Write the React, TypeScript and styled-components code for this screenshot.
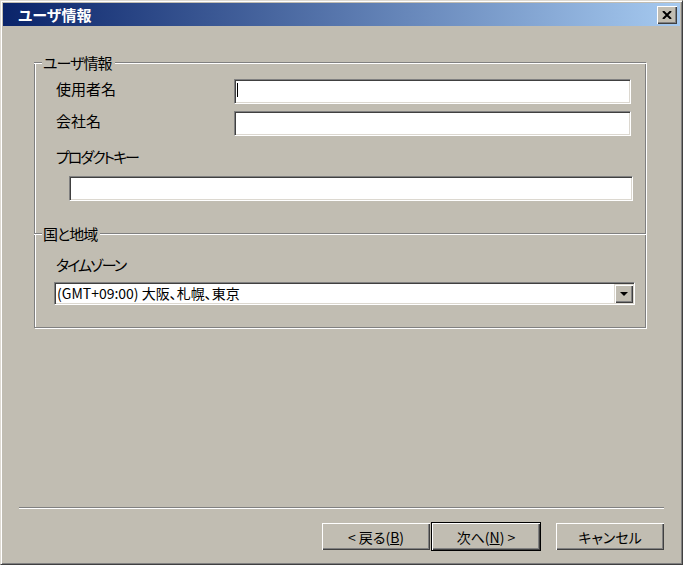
import React from "react";
import styled, { createGlobalStyle } from "styled-components";

const FACE = "#c1bdb2";

const GlobalStyle = createGlobalStyle`
  html, body {
    margin: 0;
    padding: 0;
    background: ${FACE};
  }
  body {
    font-family: "Noto Sans CJK JP", "Noto Sans", sans-serif;
    font-feature-settings: "palt";
    color: #000;
  }
`;

const Window = styled.div`
  width: 683px;
  height: 565px;
  box-sizing: border-box;
  display: flex;
  flex-direction: column;
  padding: 2px;
  background: ${FACE};
  border: 1px solid;
  border-color: #dedad2 #404040 #404040 #dedad2;
  box-shadow: inset 1px 1px 0 #fff, inset -1px -1px 0 #808080;
  overflow: hidden;
`;

const TitleBar = styled.div`
  flex: none;
  height: 23px;
  display: flex;
  align-items: center;
  padding: 0 3px 0 15px;
  background: linear-gradient(to right, #0a246a, #a6caf0);
`;

const Title = styled.span`
  flex: 1;
  color: #fff;
  font-size: 15px;
  font-weight: bold;
  line-height: 18px;
`;

const CloseButton = styled.div`
  width: 20px;
  height: 18px;
  background: ${FACE};
  box-shadow: inset 1px 1px 0 #fff, inset -1px -1px 0 #404040,
    inset -2px -2px 0 #808080;
  display: flex;
  align-items: center;
  justify-content: center;
`;

const Content = styled.div`
  padding: 36px 34px 0 31px;
`;

const GroupFrame = styled.div`
  display: flex;
  flex-direction: column;
  border: 1px solid #808080;
  border-top: none;
  box-shadow: inset 1px 0 0 #fff, 1px 1px 0 #fff;
  padding: 0 14px 22px 21px;
`;

const GroupHeader = styled.div<{ $first?: boolean }>`
  display: flex;
  align-items: center;
  height: 18px;
  margin: ${(p) => (p.$first ? "-8px" : "24px")} -15px 0 -22px;
`;

const EtchedLine = styled.div<{ $grow?: boolean }>`
  height: 0;
  border-top: 1px solid #808080;
  border-bottom: 1px solid #fff;
  width: ${(p) => (p.$grow ? "auto" : "8px")};
  flex: ${(p) => (p.$grow ? 1 : "none")};
`;

const Legend = styled.span`
  font-size: 15px;
  line-height: 18px;
  letter-spacing: -1px;
  padding: 0 3px 0 1px;
`;

const FieldRow = styled.div<{ $gap: number }>`
  display: grid;
  grid-template-columns: 178px 1fr;
  margin-top: ${(p) => p.$gap}px;
`;

const Label = styled.div<{ $gap?: number; $tight?: boolean }>`
  font-size: 15px;
  line-height: 18px;
  padding-top: 1px;
  margin-top: ${(p) => p.$gap ?? 0}px;
  letter-spacing: ${(p) => (p.$tight ? "-2px" : "0")};
`;

const TextField = styled.div`
  height: 25px;
  box-sizing: border-box;
  background: #fff;
  border: 1px solid;
  border-color: #808080 #fff #fff #808080;
  box-shadow: inset 1px 1px 0 #404040, inset -1px -1px 0 #dcd8d0;
`;

const ProductKeyField = styled(TextField)`
  margin: 10px -2px 0 13px;
`;

const Caret = styled.span`
  display: block;
  width: 1px;
  height: 14px;
  margin: 3px 0 0 2px;
  background: #000;
`;

const Select = styled.div`
  height: 23px;
  box-sizing: border-box;
  margin: 8px -4px 0 -2px;
  display: flex;
  padding: 1px;
  background: #fff;
  border: 1px solid;
  border-color: #808080 #fff #fff #808080;
  box-shadow: inset 1px 1px 0 #404040, inset -1px -1px 0 #dcd8d0;
`;

const SelectValue = styled.span`
  flex: 1;
  font-size: 14px;
  line-height: 19px;
  padding-left: 1px;
  white-space: nowrap;
`;

const DropButton = styled.div`
  width: 19px;
  height: 19px;
  background: ${FACE};
  box-shadow: inset 1px 1px 0 #dcd8d0, inset 2px 2px 0 #fff,
    inset -1px -1px 0 #404040, inset -2px -2px 0 #808080;
  display: flex;
  align-items: center;
  justify-content: center;
`;

const Footer = styled.div`
  margin-top: auto;
  padding: 0 16px 11px;
`;

const Separator = styled.div`
  border-top: 1px solid #808080;
  border-bottom: 1px solid #fff;
`;

const ButtonRow = styled.div`
  display: flex;
  justify-content: flex-end;
  align-items: center;
  height: 29px;
  margin-top: 13px;
`;

const PushButton = styled.div<{ $default?: boolean; $gapRight?: number }>`
  box-sizing: border-box;
  width: ${(p) => (p.$default ? 110 : 108)}px;
  height: ${(p) => (p.$default ? 29 : 27)}px;
  margin-right: ${(p) => p.$gapRight ?? 0}px;
  display: flex;
  align-items: center;
  justify-content: center;
  font-size: 14px;
  line-height: 18px;
  white-space: pre;
  background: ${FACE};
  border: ${(p) => (p.$default ? "1px solid #000" : "none")};
  box-shadow: inset 1px 1px 0 #fff, inset -1px -1px 0 #404040,
    inset -2px -2px 0 #808080;
`;

const AccessKey = styled.span`
  text-decoration: underline;
`;

const App = () => {
  return (
    <>
      <GlobalStyle />
      <Window>
        <TitleBar>
          <Title>ユーザ情報</Title>
          <CloseButton>
            <svg width="10" height="8" viewBox="0 0 10 8">
              <path d="M1 0 L9 8 M9 0 L1 8" stroke="#000" strokeWidth="2" />
            </svg>
          </CloseButton>
        </TitleBar>

        <Content>
          <GroupFrame>
            {/* ユーザ情報 */}
            <GroupHeader $first>
              <EtchedLine />
              <Legend>ユーザ情報</Legend>
              <EtchedLine $grow />
            </GroupHeader>
            <FieldRow $gap={7}>
              <Label>使用者名</Label>
              <TextField>
                <Caret />
              </TextField>
            </FieldRow>
            <FieldRow $gap={7}>
              <Label>会社名</Label>
              <TextField />
            </FieldRow>
            <Label $gap={11} $tight>
              プロダクトキー
            </Label>
            <ProductKeyField />

            {/* 国と地域 */}
            <GroupHeader>
              <EtchedLine />
              <Legend>国と地域</Legend>
              <EtchedLine $grow />
            </GroupHeader>
            <Label $gap={12} $tight>
              タイムゾーン
            </Label>
            <Select>
              <SelectValue>(GMT+09:00) 大阪、札幌、東京</SelectValue>
              <DropButton>
                <svg width="8" height="4" viewBox="0 0 8 4">
                  <path d="M0 0 H8 L4 4 Z" fill="#000" />
                </svg>
              </DropButton>
            </Select>
          </GroupFrame>
        </Content>

        <Footer>
          <Separator />
          <ButtonRow>
            <PushButton $gapRight={1}>
              {"< 戻る("}
              <AccessKey>B</AccessKey>)
            </PushButton>
            <PushButton $default $gapRight={15}>
              次へ(<AccessKey>N</AccessKey>
              {") >"}
            </PushButton>
            <PushButton>キャンセル</PushButton>
          </ButtonRow>
        </Footer>
      </Window>
    </>
  );
};

export default App;
